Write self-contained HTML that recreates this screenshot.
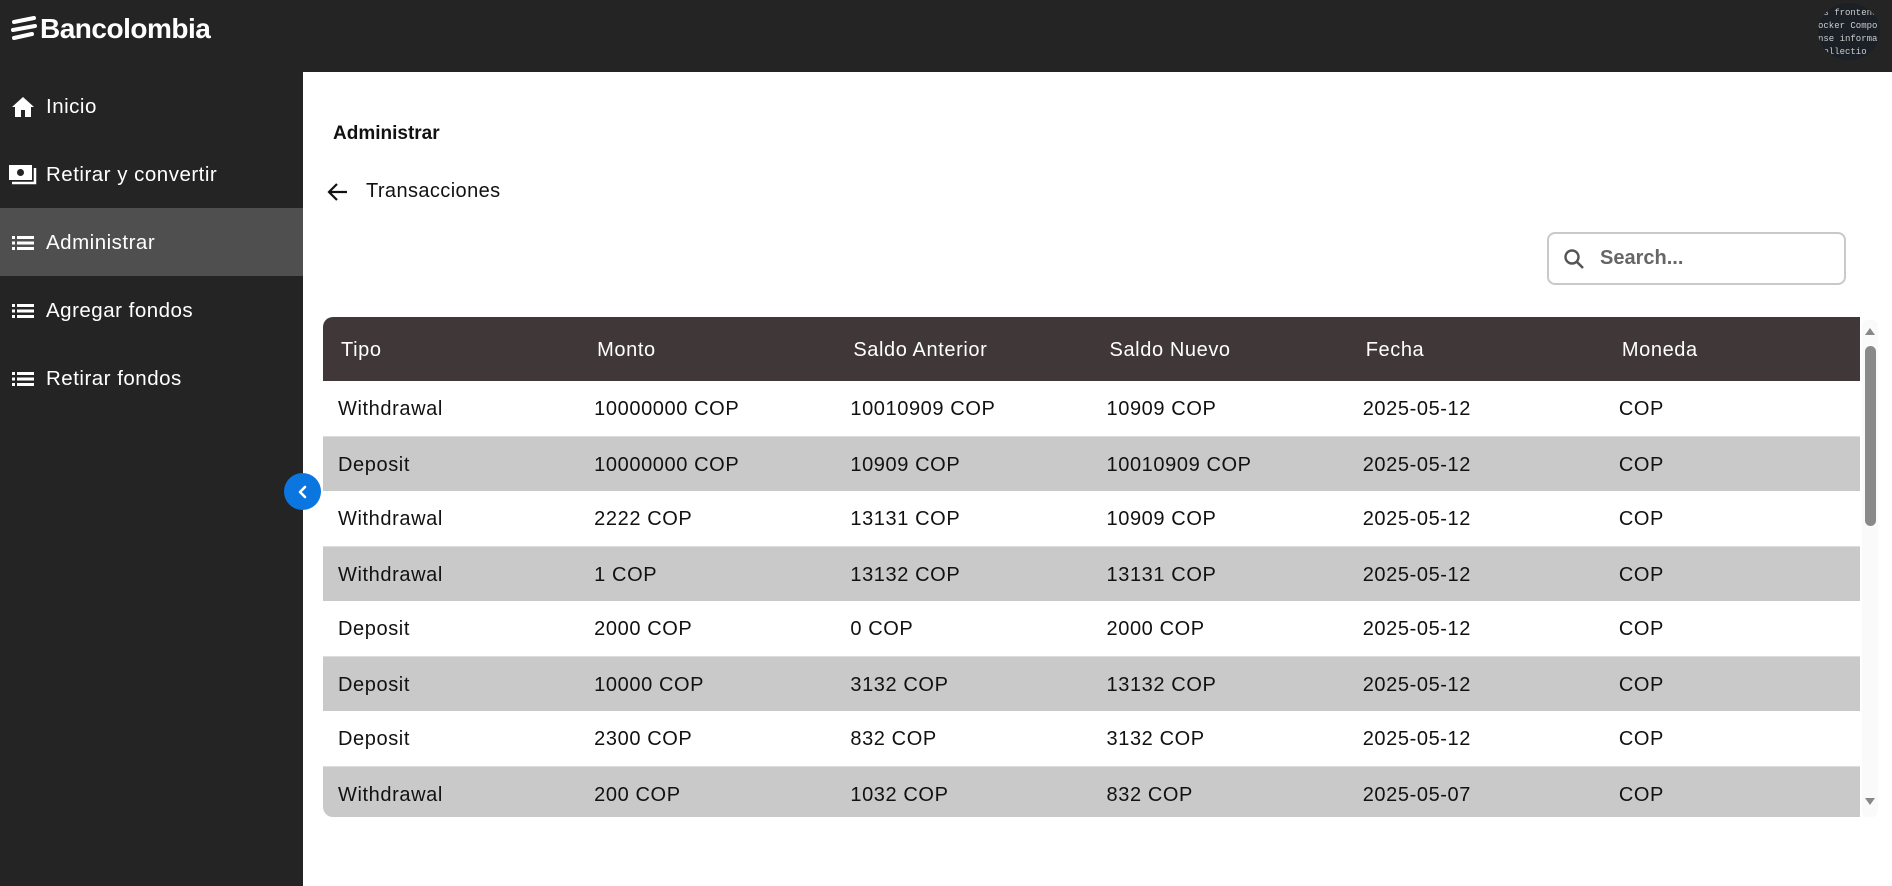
<!DOCTYPE html>
<html><head><meta charset="utf-8"><style>
*{margin:0;padding:0;box-sizing:border-box}
body{width:1892px;height:886px;overflow:hidden;background:#fff;font-family:"Liberation Sans",sans-serif;position:relative}
.top{position:absolute;left:0;top:0;width:1892px;height:72px;background:#242424}
.logo{position:absolute;left:10px;top:13px;color:#fff;font-size:28px;font-weight:bold;letter-spacing:-0.5px;display:flex;align-items:center}
.avatar{position:absolute;left:1818px;top:3px;width:62px;height:57px;border-radius:50%;background:#1b1f26;overflow:hidden;font-family:"Liberation Mono",monospace;font-size:9px;line-height:13px;color:#ccc;white-space:nowrap;padding-top:4px}
.side{position:absolute;left:0;top:72px;width:303px;height:814px;background:#242424}
.item{position:absolute;left:0;width:303px;height:68px;color:#fff;font-size:20.5px;letter-spacing:.5px;display:flex;align-items:center;padding-top:2px}
.item .ic{width:46px;display:flex;justify-content:center}
.active{background:#4f4f4f}
.btn{position:absolute;left:284px;top:473px;width:37px;height:37px;border-radius:50%;background:#0b76e0;display:flex;align-items:center;justify-content:center}
.h1{position:absolute;left:333px;top:123px;font-size:19px;font-weight:bold;color:#111}
.back{position:absolute;left:326px;top:180px;font-size:20px;letter-spacing:.4px;color:#111;display:flex;align-items:center}
.search{position:absolute;left:1547px;top:232px;width:299px;height:53px;border:2px solid #c9c9c9;border-radius:8px;display:flex;align-items:center;padding-left:13px;font-size:20px;font-weight:bold;color:#666}
.tbl{position:absolute;left:323px;top:317px;width:1537px;height:500px;border-radius:10px 0 0 10px;overflow:hidden}
.row{display:flex;height:55px;align-items:center;font-size:20px;color:#111;letter-spacing:.6px;padding-top:2px}
.row div{width:256.5px;padding-left:15px}
.hd{height:64px;background:#403738;color:#fff}
.hd div{padding-left:18px}
.g{background:#c9c9c9;border-top:1px solid #ddd}
.sb{position:absolute;left:1862px;top:320px;width:16px;height:497px;background:#fafafa;border-radius:6px}
.thumb{position:absolute;left:1865px;top:346px;width:11px;height:180px;background:#8a8a8a;border-radius:6px}
</style></head><body>
<div class="top">
 <div class="logo"><svg width="28" height="26" viewBox="0 0 28 26"><path d="M4 6 L24 2" stroke="#fff" stroke-width="4" stroke-linecap="round"/><path d="M3 14 L25 10" stroke="#fff" stroke-width="4" stroke-linecap="round"/><path d="M4 22 L22 18" stroke="#fff" stroke-width="4" stroke-linecap="round"/></svg><span style="margin-left:2px">Bancolombia</span></div>
 <div class="avatar">;s frontend<br>ocker Compo<br>nse informa<br>collectio</div>
</div>
<div class="side">
 <div class="item" style="top:0"><div class="ic"><svg width="24" height="22" viewBox="0 0 24 22"><path d="M12 1 L1 11 H4 V21 H10 V14 H14 V21 H20 V11 H23 Z" fill="#fff"/></svg></div><span>Inicio</span></div>
 <div class="item" style="top:68px"><div class="ic"><svg width="30" height="24" viewBox="0 0 30 24"><rect x="1" y="2" width="23" height="15" fill="#fff"/><circle cx="12.5" cy="9.5" r="3.5" fill="#242424"/><path d="M4 20 H27 V5" stroke="#fff" stroke-width="2.5" fill="none"/></svg></div><span>Retirar y convertir</span></div>
 <div class="item active" style="top:136px"><div class="ic"><svg width="24" height="16" viewBox="0 0 24 16"><g fill="#fff"><rect x="1" y="1" width="3" height="3"/><rect x="1" y="6.5" width="3" height="3"/><rect x="1" y="12" width="3" height="3"/><rect x="6" y="1" width="17" height="3"/><rect x="6" y="6.5" width="17" height="3"/><rect x="6" y="12" width="17" height="3"/></g></svg></div><span>Administrar</span></div>
 <div class="item" style="top:204px"><div class="ic"><svg width="24" height="16" viewBox="0 0 24 16"><g fill="#fff"><rect x="1" y="1" width="3" height="3"/><rect x="1" y="6.5" width="3" height="3"/><rect x="1" y="12" width="3" height="3"/><rect x="6" y="1" width="17" height="3"/><rect x="6" y="6.5" width="17" height="3"/><rect x="6" y="12" width="17" height="3"/></g></svg></div><span>Agregar fondos</span></div>
 <div class="item" style="top:272px"><div class="ic"><svg width="24" height="16" viewBox="0 0 24 16"><g fill="#fff"><rect x="1" y="1" width="3" height="3"/><rect x="1" y="6.5" width="3" height="3"/><rect x="1" y="12" width="3" height="3"/><rect x="6" y="1" width="17" height="3"/><rect x="6" y="6.5" width="17" height="3"/><rect x="6" y="12" width="17" height="3"/></g></svg></div><span>Retirar fondos</span></div>
</div>
<div class="btn"><svg width="14" height="14" viewBox="0 0 14 14"><path d="M9 2 L4 7 L9 12" stroke="#fff" stroke-width="2.6" fill="none" stroke-linecap="round" stroke-linejoin="round"/></svg></div>
<div class="h1">Administrar</div>
<div class="back"><svg width="24" height="22" viewBox="0 0 24 22"><path d="M21 11 H3 M11 3 L3 11 L11 19" stroke="#111" stroke-width="2.2" fill="none"/></svg><span style="margin-left:16px">Transacciones</span></div>
<div class="search"><svg width="24" height="24" viewBox="0 0 24 24"><circle cx="10" cy="10" r="6.5" stroke="#555" stroke-width="2.4" fill="none"/><path d="M15 15 L21 21" stroke="#555" stroke-width="2.6"/></svg><span style="margin-left:14px">Search...</span></div>
<div class="tbl">
 <div class="row hd"><div>Tipo</div><div>Monto</div><div>Saldo Anterior</div><div>Saldo Nuevo</div><div>Fecha</div><div>Moneda</div></div>
 <div class="row"><div>Withdrawal</div><div>10000000 COP</div><div>10010909 COP</div><div>10909 COP</div><div>2025-05-12</div><div>COP</div></div>
 <div class="row g"><div>Deposit</div><div>10000000 COP</div><div>10909 COP</div><div>10010909 COP</div><div>2025-05-12</div><div>COP</div></div>
 <div class="row"><div>Withdrawal</div><div>2222 COP</div><div>13131 COP</div><div>10909 COP</div><div>2025-05-12</div><div>COP</div></div>
 <div class="row g"><div>Withdrawal</div><div>1 COP</div><div>13132 COP</div><div>13131 COP</div><div>2025-05-12</div><div>COP</div></div>
 <div class="row"><div>Deposit</div><div>2000 COP</div><div>0 COP</div><div>2000 COP</div><div>2025-05-12</div><div>COP</div></div>
 <div class="row g"><div>Deposit</div><div>10000 COP</div><div>3132 COP</div><div>13132 COP</div><div>2025-05-12</div><div>COP</div></div>
 <div class="row"><div>Deposit</div><div>2300 COP</div><div>832 COP</div><div>3132 COP</div><div>2025-05-12</div><div>COP</div></div>
 <div class="row g"><div>Withdrawal</div><div>200 COP</div><div>1032 COP</div><div>832 COP</div><div>2025-05-07</div><div>COP</div></div>
</div>
<div class="sb"></div>
<div class="thumb"></div>
<svg style="position:absolute;left:1864px;top:326px" width="12" height="10"><path d="M1 9 L6 2 L11 9Z" fill="#888"/></svg>
<svg style="position:absolute;left:1864px;top:797px" width="12" height="10"><path d="M1 1 L6 8 L11 1Z" fill="#888"/></svg>
</body></html>
